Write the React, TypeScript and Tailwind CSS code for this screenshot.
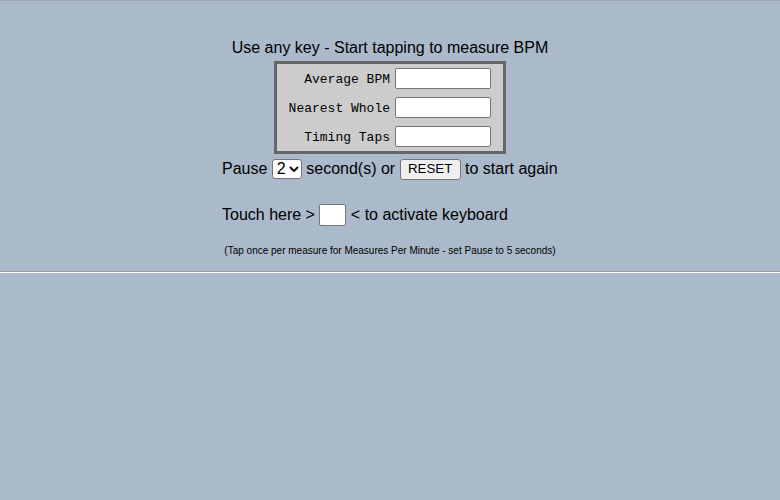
import React from "react";

const sans = { fontFamily: '"Liberation Sans", Arial, sans-serif' };
const mono = { fontFamily: '"Liberation Mono", "Courier New", monospace' };

function Row({ label }: { label: string }) {
  return (
    <div className="flex items-center justify-end h-[21px]">
      <span className="text-[13px] leading-none text-black pt-[2px]" style={mono}>
        {label}
      </span>
      <div className="ml-[5px] w-[96px] h-[21px] bg-white border border-[#767676] rounded-[2px]" />
    </div>
  );
}

export default function App() {
  return (
    <div
      className="w-[780px] h-[500px] bg-[#aabacb] border-t border-[#9ea6b3] text-black"
      style={sans}
    >
      <div className="w-[336px] mx-auto flex flex-col">
        <div className="mt-[38px] h-[18px] text-[16px] leading-[18px] text-center">
          Use any key - Start tapping to measure BPM
        </div>
        <div className="mt-[4px] self-center w-[232px] border-[3px] border-[#666666] bg-[#cccccc] pl-[10px] pr-[12px] py-[4px] flex flex-col gap-[8px]">
          <Row label="Average BPM" />
          <Row label="Nearest Whole" />
          <Row label="Timing Taps" />
        </div>
        <div className="mt-[4px] h-[22px] flex items-center text-[16px] whitespace-pre">
          <span>Pause </span>
          <div className="w-[30px] h-[20px] bg-white border border-[#767676] rounded-[3px] flex items-center pl-[4px] gap-[3px]">
            <span className="text-[16px] leading-none">2</span>
            <svg width="10" height="7" viewBox="0 0 10 7">
              <path d="M1.5 1.5 L5 5 L8.5 1.5" fill="none" stroke="#000" strokeWidth="1.8" strokeLinecap="round" strokeLinejoin="round" />
            </svg>
          </div>
          <span> second(s) or </span>
          <div className="w-[61px] h-[21px] bg-[#efefef] border border-[#767676] rounded-[3px] flex items-center justify-center text-[13.33px] leading-none">
            RESET
          </div>
          <span> to start again</span>
        </div>
        <div className="mt-[23px] h-[24px] flex items-center text-[16px] whitespace-pre">
          <span>Touch here &gt; </span>
          <div className="w-[27px] h-[22px] bg-white border border-[#767676] rounded-[2px]" />
          <span> &lt; to activate keyboard</span>
        </div>
        <div className="mt-[18px] h-[12px] text-[10px] leading-[12px] text-center">
          (Tap once per measure for Measures Per Minute - set Pause to 5 seconds)
        </div>
      </div>
      <div className="mt-[14px] border-t border-[#9a9a9a] border-b border-b-white" />
    </div>
  );
}
